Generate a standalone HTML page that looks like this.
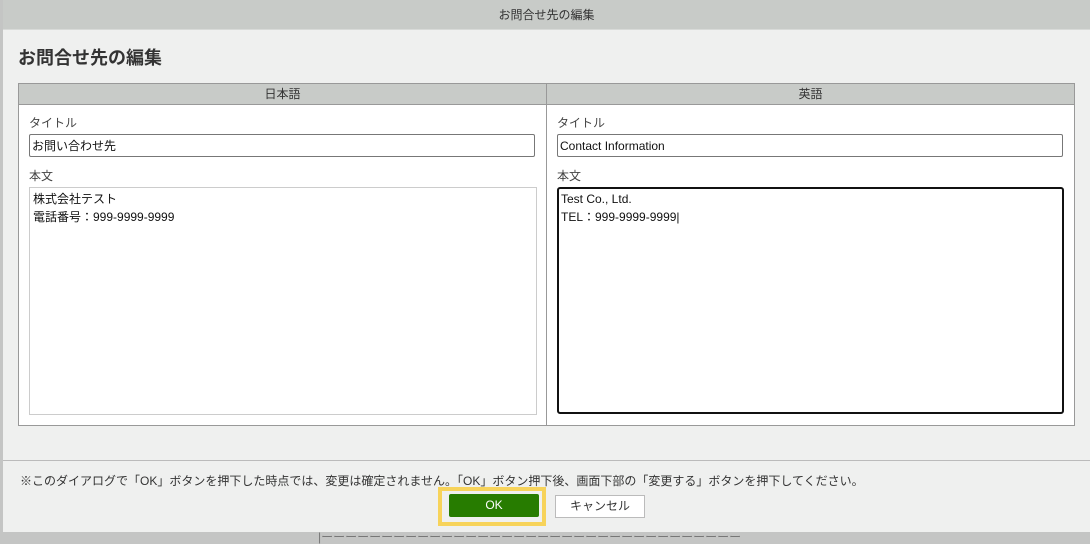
<!DOCTYPE html>
<html><head><meta charset="utf-8"><style>
body{margin:0;width:1090px;height:537px;background:#c4c5c4;position:relative;overflow:hidden;font-family:"Liberation Sans","Noto Sans CJK JP",sans-serif;color:#333}
.dlg{position:absolute;left:3px;top:0;width:1087px;height:532px;background:#eff0ef}
.tb{height:29px;background:#c8cbc8;border-bottom:1px solid #d8dad8;text-align:center;font-size:12px;line-height:30px;color:#333}
h1{position:absolute;left:15px;top:44px;margin:0;font-size:18px;font-weight:bold;color:#333}
.tbl{position:absolute;left:15px;top:83px;width:1055px;height:341px;border:1px solid #999;background:#fff}
.hd{position:absolute;top:0;height:20px;background:#c8cbc8;border-bottom:1px solid #999;font-size:12px;line-height:21px;text-align:center}
.lbl{position:absolute;font-size:12px;color:#444}
.in{position:absolute;height:23px;border:1px solid #777;border-radius:2px;font-size:12px;line-height:23px;padding-left:2px;box-sizing:border-box;background:#fff;color:#111}
.ta{position:absolute;border:1px solid #ccc;font-size:12px;line-height:18px;padding:2px 3px;box-sizing:border-box;color:#111;background:#fff}
.sep{position:absolute;left:0;right:0;top:460px;border-top:1px solid #bbb}
.note{position:absolute;left:17px;top:472px;font-size:12px;color:#333}
.okw{position:absolute;left:435px;top:487px;width:100px;height:31px;border:4px solid #f7d35a}
.ok{position:absolute;left:446px;top:494px;width:90px;height:23px;background:#277c00;color:#fff;font-size:12px;line-height:23px;text-align:center;border-radius:2px}
.cn{position:absolute;left:552px;top:495px;width:88px;height:21px;border:1px solid #bbb;background:#fff;font-size:12px;line-height:21px;text-align:center;box-sizing:content-box}
.bt{position:absolute;left:318px;top:532px;font-size:12px;color:#777;line-height:10px}
</style></head><body>
<div class="bt">|ーーーーーーーーーーーーーーーーーーーーーーーーーーーーーーーーーーー</div>
<div class="dlg">
<div class="tb">お問合せ先の編集</div>
<h1>お問合せ先の編集</h1>
<div class="tbl">
 <div class="hd" style="left:0;width:527px;border-right:1px solid #999">日本語</div>
 <div class="hd" style="left:528px;width:527px">英語</div>
 <div style="position:absolute;left:527px;top:0;bottom:0;border-left:1px solid #999"></div>
 <div class="lbl" style="left:10px;top:30px">タイトル</div>
 <div class="in" style="left:10px;top:50px;width:506px">お問い合わせ先</div>
 <div class="lbl" style="left:10px;top:83px">本文</div>
 <div class="ta" style="left:10px;top:103px;width:508px;height:228px">株式会社テスト<br>電話番号：999-9999-9999</div>
 <div class="lbl" style="left:538px;top:30px">タイトル</div>
 <div class="in" style="left:538px;top:50px;width:506px">Contact Information</div>
 <div class="lbl" style="left:538px;top:83px">本文</div>
 <div class="ta" style="left:538px;top:103px;width:507px;height:227px;border:2px solid #111;border-radius:3px;padding:1px 2px">Test Co., Ltd.<br>TEL：999-9999-9999|</div>
</div>
<div class="sep"></div>
<div class="note">※このダイアログで「OK」ボタンを押下した時点では、変更は確定されません。「OK」ボタン押下後、画面下部の「変更する」ボタンを押下してください。</div>
<div class="okw"></div><div class="ok">OK</div>
<div class="cn">キャンセル</div>
</div>
</body></html>
